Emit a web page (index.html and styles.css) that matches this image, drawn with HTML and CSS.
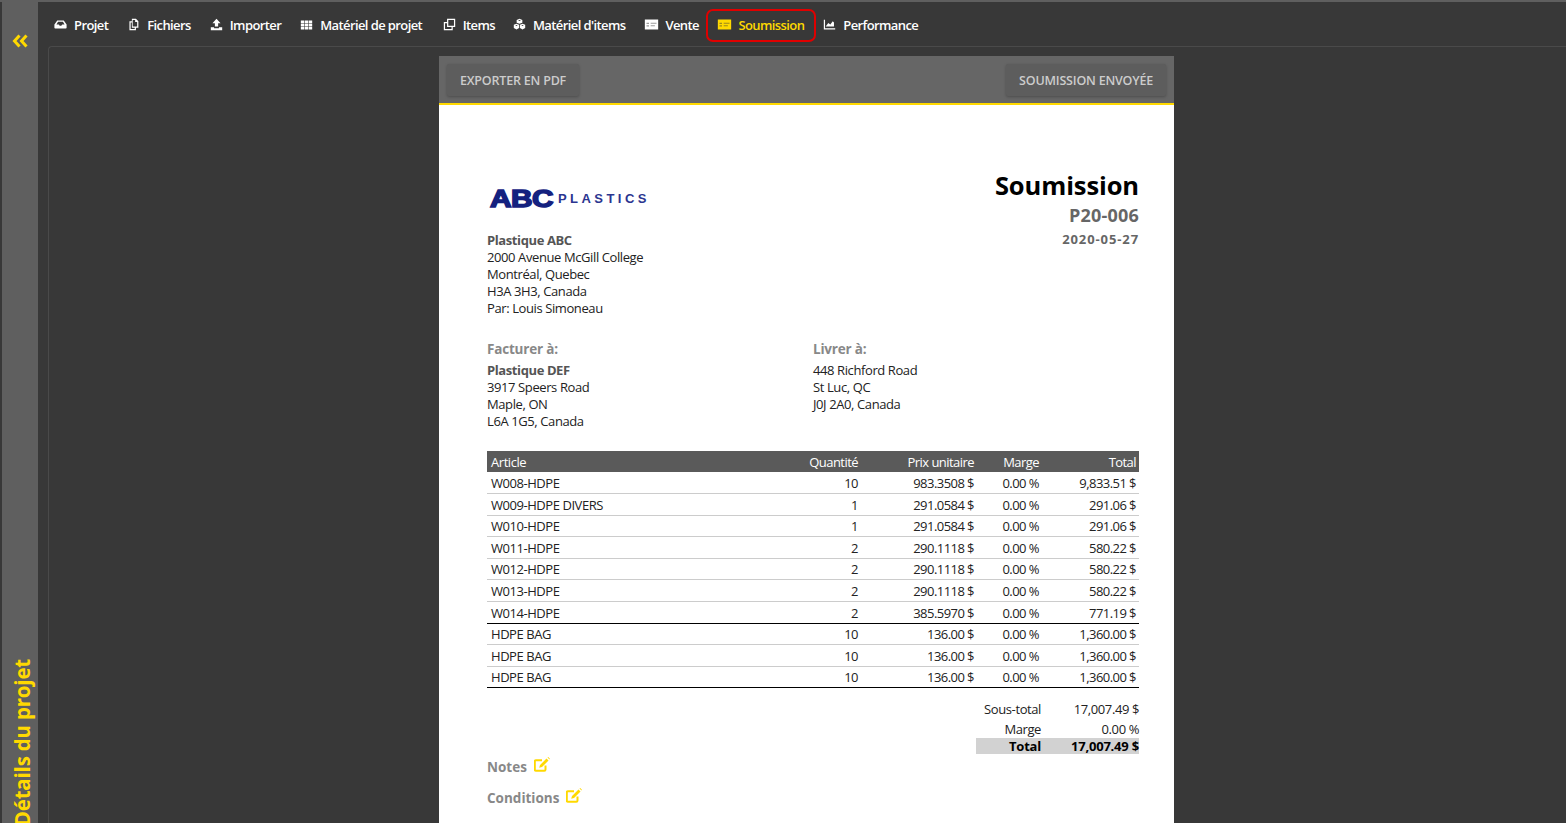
FILE: index.html
```html
<!DOCTYPE html>
<html lang="fr">
<head>
    <meta charset="UTF-8">
    <title>Soumission</title>
    <link rel="stylesheet" href="styles.css">
</head>
<body>
    <div class="app">
        <!-- Side rail -->
        <aside class="rail">
            <svg class="rail-arrow" viewBox="0 0 16 14"><path d="M7 1.500 2 7l5 5.500M14 1.500 9 7l5 5.500" fill="none" stroke="#ffd900" stroke-width="3"/></svg>
            <div class="rail-title">Détails du projet</div>
        </aside>

        <div class="main">
            <!-- Top navigation -->
            <nav class="tabs">
                <a class="tab"><svg class="icon" viewBox="0 0 16 16"><path fill-rule="evenodd" d="M4 3h8l3.500 5v4a1 1 0 0 1-1 1h-13a1 1 0 0 1-1-1V8zm1 1.500L3 8h3l1 1.500h2L10 8h3l-2-3.500z"/></svg>Projet</a>
                <a class="tab"><svg class="icon" viewBox="0 0 16 16"><path fill-rule="evenodd" d="M6 1h5l3 3v8h-3v3H3V4h3zm1 1.500V10.500h5.500V5H10V2.500zM4.500 5.500v8H9.500V12H6V5.500z"/></svg>Fichiers</a>
                <a class="tab"><svg class="icon" viewBox="0 0 16 16"><path d="M8 1l5 5.500h-3v4H6v-4H3zM1 11.500h4v1h6v-1h4V15H1z"/></svg>Importer</a>
                <a class="tab"><svg class="icon" viewBox="0 0 16 16"><path d="M1 3h4.200v3H1zM5.900 3h4.200v3H5.900zM10.800 3H15v3h-4.200zM1 6.800h4.200v2.900H1zM5.900 6.800h4.200v2.900H5.900zM10.800 6.800H15v2.900h-4.200zM1 10.400h4.200V14H1zM5.900 10.400h4.200V14H5.900zM10.800 10.400H15V14h-4.200z"/></svg>Matériel de projet</a>
                <a class="tab tab-items"><svg class="icon" viewBox="0 0 16 16"><path fill-rule="evenodd" d="M5 1h10v10h-3v4H1V5h4zm1.500 1.500v7h7v-7zM2.500 6.500v7h8V11H5V6.500z"/></svg>Items</a>
                <a class="tab"><svg class="icon" viewBox="0 0 16 16"><path fill-rule="evenodd" d="M8 1l3.500 1.400v3.400L8 7.200 4.500 5.800V2.400zM6.200 3.100 8 3.800l1.800-.7L8 2.400zM4.300 7l3.200 1.400v3.800L4.300 14 1 12.300V8.400zM2.700 9.200l1.600.7 1.500-.7-1.500-.7zM11.700 7 15 8.400v3.900L11.700 14l-3.200-1.800V8.400zM10.200 9.200l1.500.7 1.600-.7-1.600-.7z"/></svg>Matériel d'items</a>
                <a class="tab"><svg class="icon icon-wide" viewBox="0 0 18 14"><path d="M1 1h16v12H1z"/><path class="icon-lines" d="M3 5v1.500h3V5zM3 8v1.500h3V8zM8 5v1h7V5zM8 8v1h5V8z"/></svg>Vente</a>
                <a class="tab tab-active"><svg class="icon icon-wide" viewBox="0 0 18 14"><path d="M1 1h16v12H1z"/><path class="icon-lines" d="M3 5v1.500h3V5zM3 8v1.500h3V8zM8 5v1h7V5zM8 8v1h5V8z"/></svg>Soumission</a>
                <a class="tab"><svg class="icon" viewBox="0 0 16 16"><path d="M1 2h1.500v10.500H15V14H1z"/><path d="M3.500 10l3-4 2.500 2 3-4 1.500 1.500V10.500H3.500z"/></svg>Performance</a>
            </nav>

            <div class="panel">
                <div class="doc">
                    <div class="doc-toolbar">
                        <button class="doc-btn">Exporter en PDF</button>
                        <button class="doc-btn">Soumission envoyée</button>
                    </div>

                    <div class="doc-body">
                        <!-- Company and quote number -->
                        <div class="doc-head">
                            <div>
                                <svg class="logo" viewBox="0 0 162 30">
                                    <text x="3" y="25" class="logo-abc" textLength="63" lengthAdjust="spacingAndGlyphs">ABC</text>
                                    <text x="71" y="21" class="logo-sub" textLength="88" lengthAdjust="spacing">PLASTICS</text>
                                </svg>
                                <div class="address company">
                                    <strong>Plastique ABC</strong><br>
                                    2000 Avenue McGill College<br>
                                    Montréal, Quebec<br>
                                    H3A 3H3, Canada<br>
                                    Par: Louis Simoneau
                                </div>
                            </div>
                            <div class="doc-title">
                                <h1>Soumission</h1>
                                <div class="doc-number">P20-006</div>
                                <div class="doc-date">2020-05-27</div>
                            </div>
                        </div>

                        <div class="parties">
                            <div>
                                <h4>Facturer à:</h4>
                                <div class="address">
                                    <strong>Plastique DEF</strong><br>
                                    3917 Speers Road<br>
                                    Maple, ON<br>
                                    L6A 1G5, Canada
                                </div>
                            </div>
                            <div>
                                <h4>Livrer à:</h4>
                                <div class="address">
                                    448 Richford Road<br>
                                    St Luc, QC<br>
                                    J0J 2A0, Canada
                                </div>
                            </div>
                        </div>

                        <table class="items">
                            <colgroup>
                                <col>
                                <col class="col-qty">
                                <col class="col-price">
                                <col class="col-margin">
                                <col class="col-total">
                            </colgroup>
                            <thead>
                                <tr><th>Article</th><th>Quantité</th><th>Prix unitaire</th><th>Marge</th><th>Total</th></tr>
                            </thead>
                            <tbody>
                                <tr><td>W008-HDPE</td><td>10</td><td>983.3508 $</td><td>0.00 %</td><td>9,833.51 $</td></tr>
                                <tr><td>W009-HDPE DIVERS</td><td>1</td><td>291.0584 $</td><td>0.00 %</td><td>291.06 $</td></tr>
                                <tr><td>W010-HDPE</td><td>1</td><td>291.0584 $</td><td>0.00 %</td><td>291.06 $</td></tr>
                                <tr><td>W011-HDPE</td><td>2</td><td>290.1118 $</td><td>0.00 %</td><td>580.22 $</td></tr>
                                <tr><td>W012-HDPE</td><td>2</td><td>290.1118 $</td><td>0.00 %</td><td>580.22 $</td></tr>
                                <tr><td>W013-HDPE</td><td>2</td><td>290.1118 $</td><td>0.00 %</td><td>580.22 $</td></tr>
                                <tr class="row-last"><td>W014-HDPE</td><td>2</td><td>385.5970 $</td><td>0.00 %</td><td>771.19 $</td></tr>
                                <tr><td>HDPE BAG</td><td>10</td><td>136.00 $</td><td>0.00 %</td><td>1,360.00 $</td></tr>
                                <tr><td>HDPE BAG</td><td>10</td><td>136.00 $</td><td>0.00 %</td><td>1,360.00 $</td></tr>
                                <tr class="row-end"><td>HDPE BAG</td><td>10</td><td>136.00 $</td><td>0.00 %</td><td>1,360.00 $</td></tr>
                            </tbody>
                        </table>

                        <div class="totals">
                            <div class="totals-row"><span>Sous-total</span><span>17,007.49 $</span></div>
                            <div class="totals-row totals-margin"><span>Marge</span><span>0.00 %</span></div>
                            <div class="totals-row totals-grand"><span>Total</span><span>17,007.49 $</span></div>
                        </div>

                        <div class="notes">
                            <div class="note-title">Notes <svg class="edit" viewBox="0 0 16 15"><path fill="none" stroke="#ffd900" stroke-width="2" d="M11.500 8.500v4a1.200 1.200 0 0 1-1.200 1.200H2a1.200 1.200 0 0 1-1.200-1.200V4.500A1.200 1.200 0 0 1 2 3.300h6"/><path fill="#ffd900" d="M12.500 1.500l2 2L8 10l-2.800.8L6 8zM13.500.5l.7-.4 1.700 1.700-.4.7z"/></svg></div>
                            <div class="note-title">Conditions <svg class="edit" viewBox="0 0 16 15"><path fill="none" stroke="#ffd900" stroke-width="2" d="M11.500 8.500v4a1.200 1.200 0 0 1-1.200 1.200H2a1.200 1.200 0 0 1-1.200-1.200V4.500A1.200 1.200 0 0 1 2 3.300h6"/><path fill="#ffd900" d="M12.500 1.500l2 2L8 10l-2.800.8L6 8zM13.500.5l.7-.4 1.700 1.700-.4.7z"/></svg></div>
                        </div>
                    </div>
                </div>
            </div>
        </div>
    </div>
</body>
</html>
```

FILE: styles.css
```css
/* Page shell */
html, body {
    height: 100%;
}

body {
    margin: 0;
    background-color: #383838;
    font-family: "Open Sans", "Noto Sans", sans-serif;
    font-size: 13px;
    overflow: hidden;
}

.app {
    display: flex;
    height: 823px;
    overflow: hidden;
    box-sizing: border-box;
    border-top: 2px solid #5f5f5f;
}

/* Left rail with the collapse arrow */
.rail {
    flex: none;
    width: 36px;
    margin-left: 2px;
    background-color: #5f5f5f;
    display: flex;
    flex-direction: column;
    align-items: center;
    justify-content: space-between;
    overflow: hidden;
}

.rail-arrow {
    width: 17px;
    height: 14px;
    margin-top: 32px;
}

.rail-title {
    writing-mode: vertical-rl;
    transform: rotate(180deg);
    color: #ffd900;
    font-size: 20.500px;
    font-weight: 700;
    line-height: 24px;
    letter-spacing: -0.2px;
    white-space: nowrap;
    margin-bottom: -3px;
    margin-left: 3px;
}

.main {
    flex: 1;
    min-width: 0;
    display: flex;
    flex-direction: column;
}

/* Top tabs */
.tabs {
    flex: none;
    display: flex;
    align-items: center;
    height: 44px;
    padding-left: 6.500px;
}

.tab {
    display: flex;
    align-items: center;
    height: 33px;
    box-sizing: border-box;
    margin-top: 3px;
    padding: 0 7.500px 2px;
    border: 2px solid transparent;
    border-radius: 7px;
    color: #fff;
    font-size: 13px;
    font-weight: 600;
    letter-spacing: -0.6px;
    white-space: nowrap;
}

.tab-items {
    margin-left: 1.500px;
    margin-right: -1px;
}

.tab-active {
    margin-left: -2px;
    margin-right: -2.500px;
    padding-left: 9px;
    padding-right: 10px;
    color: #ffd900;
    border-color: #e00000;
}

.icon {
    width: 13px;
    height: 13px;
    margin-right: 7px;
    fill: currentColor;
}

.icon-wide {
    width: 15px;
    margin-right: 6px;
}

.icon-lines {
    fill: #383838;
    fill-opacity: 0.5;
}

/* Dark panel that holds the document */
.panel {
    flex: 1;
    min-height: 0;
    margin-left: 10px;
    padding: 9px 2px 0 0;
    border-top: 1px solid #4a4a4a;
    border-left: 1px solid #4a4a4a;
    border-top-left-radius: 4px;
}

.doc {
    width: 735px;
    margin: 0 auto;
    background-color: #fff;
}

.doc-toolbar {
    display: flex;
    justify-content: space-between;
    align-items: center;
    height: 47px;
    padding: 0 8px;
    background-color: #666;
    border-bottom: 2px solid #ffd900;
}

.doc-btn {
    height: 32px;
    margin-top: 1px;
    padding: 0 13px;
    border: none;
    border-radius: 2px;
    background-color: #5d5d5d;
    box-shadow: 0 1px 3px rgba(0, 0, 0, 0.25);
    color: #ccc;
    font-family: inherit;
    font-size: 12.500px;
    font-weight: 600;
    letter-spacing: -0.2px;
    text-transform: uppercase;
}

.doc-body {
    padding: 65px 35px 40px 48px;
    color: #222;
    letter-spacing: -0.4px;
}

/* Company block and quote title */
.doc-head {
    display: flex;
    justify-content: space-between;
}

.logo {
    display: block;
    width: 162px;
    height: 30px;
    margin-top: 12px;
}

.logo-abc {
    font-family: "Liberation Sans", sans-serif;
    font-size: 24px;
    font-weight: bold;
    fill: #14217f;
    stroke: #14217f;
    stroke-width: 1.500px;
}

.logo-sub {
    font-family: "Liberation Sans", sans-serif;
    font-size: 13px;
    font-weight: bold;
    fill: #2b3590;
}

.address {
    line-height: 17px;
}

.address strong {
    color: #555;
}

.company {
    margin-top: 20px;
}

.doc-title {
    margin-top: -2px;
    text-align: right;
}

.doc-title h1 {
    margin: 0;
    font-size: 25.500px;
    line-height: 34px;
    font-weight: 700;
    color: #000;
    letter-spacing: -0.1px;
}

.doc-number {
    margin-top: 1px;
    font-size: 18px;
    line-height: 24px;
    font-weight: 700;
    color: #666;
    letter-spacing: 0.2px;
}

.doc-date {
    font-size: 13px;
    line-height: 24px;
    font-weight: 700;
    color: #666;
    letter-spacing: 0.9px;
}

/* Billing and delivery */
.parties {
    display: grid;
    grid-template-columns: 326px 1fr;
    margin-top: 23px;
}

.parties h4 {
    margin: 0 0 3px;
    font-size: 13.500px;
    line-height: 19px;
    font-weight: 700;
    color: #888;
    letter-spacing: -0.2px;
}

/* Line items */
.items {
    width: 100%;
    margin-top: 21px;
    border-collapse: collapse;
    table-layout: fixed;
}

.col-qty { width: 100px; }
.col-price { width: 116px; }
.col-margin { width: 65px; }
.col-total { width: 97px; }

.items th,
.items td {
    padding: 0 3px;
    height: 21.500px;
    box-sizing: border-box;
    text-align: right;
    font-weight: 400;
    line-height: 17px;
    letter-spacing: -0.55px;
}

.items th {
    height: 21px;
    padding-top: 1px;
    background-color: #5a5a5a;
    color: #fff;
    font-weight: 500;
}

.items td {
    padding-top: 2px;
    border-bottom: 1px solid #ccc;
}

.items th:first-child,
.items td:first-child {
    padding-left: 4px;
    text-align: left;
    letter-spacing: -0.45px;
}

.items .row-last td {
    height: 22px;
    border-bottom: 1.500px solid #000;
}

.items .row-end td {
    height: 21px;
    border-bottom: 1.500px solid #000;
}

/* Totals */
.totals {
    width: 163px;
    margin: 12px 0 0 auto;
}

.totals-row {
    display: grid;
    grid-template-columns: 65px 98px;
    text-align: right;
    line-height: 19px;
}

.totals-margin {
    padding-top: 1px;
    line-height: 18px;
}

.totals-grand {
    height: 16px;
    line-height: 16px;
    background-color: #d2d2d2;
    color: #000;
    font-weight: 700;
    letter-spacing: -0.2px;
}

.notes {
    margin-top: -2px;
}

.note-title {
    display: flex;
    align-items: center;
    gap: 7px;
    height: 31px;
    font-size: 13.500px;
    font-weight: 700;
    color: #888;
    letter-spacing: 0;
}

.edit {
    width: 16px;
    height: 15px;
    margin-bottom: 5px;
}
```
